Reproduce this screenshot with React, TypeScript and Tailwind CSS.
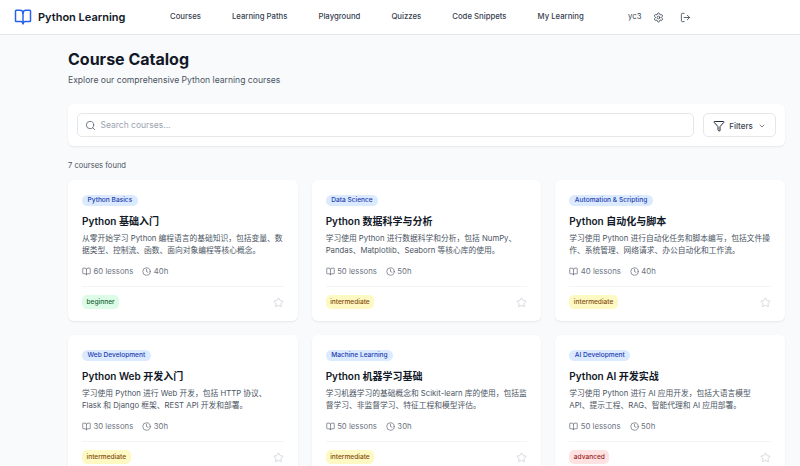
import { BookOpen, ChevronDown, Clock, Filter, LogOut, Search, Settings, Star } from "lucide-react";

const font = "[font-family:Inter,'Noto_Sans_CJK_SC',sans-serif]";

const navItems = ["Courses", "Learning Paths", "Playground", "Quizzes", "Code Snippets", "My Learning"];

const courses = [
  {
    category: "Python Basics",
    title: "Python 基础入门",
    description: "从零开始学习 Python 编程语言的基础知识，包括变量、数据类型、控制流、函数、面向对象编程等核心概念。",
    lessons: 60,
    hours: 40,
    level: "beginner",
  },
  {
    category: "Data Science",
    title: "Python 数据科学与分析",
    description: "学习使用 Python 进行数据科学和分析，包括 NumPy、Pandas、Matplotlib、Seaborn 等核心库的使用。",
    lessons: 50,
    hours: 50,
    level: "intermediate",
  },
  {
    category: "Automation & Scripting",
    title: "Python 自动化与脚本",
    description: "学习使用 Python 进行自动化任务和脚本编写，包括文件操作、系统管理、网络请求、办公自动化和工作流。",
    lessons: 40,
    hours: 40,
    level: "intermediate",
  },
  {
    category: "Web Development",
    title: "Python Web 开发入门",
    description: "学习使用 Python 进行 Web 开发，包括 HTTP 协议、Flask 和 Django 框架、REST API 开发和部署。",
    lessons: 30,
    hours: 30,
    level: "intermediate",
  },
  {
    category: "Machine Learning",
    title: "Python 机器学习基础",
    description: "学习机器学习的基础概念和 Scikit-learn 库的使用，包括监督学习、非监督学习、特征工程和模型评估。",
    lessons: 50,
    hours: 30,
    level: "intermediate",
  },
  {
    category: "AI Development",
    title: "Python AI 开发实战",
    description: "学习使用 Python 进行 AI 应用开发，包括大语言模型 API、提示工程、RAG、智能代理和 AI 应用部署。",
    lessons: 50,
    hours: 50,
    level: "advanced",
  },
];

const levelStyles: Record<string, string> = {
  beginner: "bg-[#dcfce7] text-[#166534]",
  intermediate: "bg-[#fef9c3] text-[#854d0e]",
  advanced: "bg-[#fee2e2] text-[#991b1b]",
};

const Navbar = () => (
  <header className="flex h-[35px] items-center border-b border-[#e5e7eb] bg-white">
    <div className="ml-[14px] flex w-[156px] items-center gap-[6px]">
      <BookOpen className="h-[18px] w-[18px] text-[#2563eb]" strokeWidth={2} />
      <span className="text-[11px] font-semibold text-[#111827]">Python Learning</span>
    </div>
    <nav className="flex w-[458px] items-center gap-[31px]">
      {navItems.map((item) => (
        <span key={item} className="text-[7.75px] font-medium text-[#374151]">
          {item}
        </span>
      ))}
    </nav>
    <span className="text-[7.75px] text-[#374151]">yc3</span>
    <Settings className="ml-[12px] h-[11px] w-[11px] text-[#4b5563]" />
    <LogOut className="ml-[16px] h-[11px] w-[11px] text-[#4b5563]" />
  </header>
);

const CourseCard = ({ course }: { course: (typeof courses)[number] }) => (
  <div className="flex h-[141px] flex-col rounded-[6px] bg-white px-[14px] pt-[15px] shadow-[0_1px_2px_rgba(0,0,0,0.08)]">
    <div className="flex">
      <span className="rounded-full bg-[#dbeafe] px-[5.5px] text-[6.6px] leading-[11px] font-medium text-[#1e40af]">
        {course.category}
      </span>
    </div>
    <h3 className="mt-[8px] text-[10px] leading-[14px] font-semibold text-[#111827]">{course.title}</h3>
    <p className="mt-[5px] h-[23px] text-[7.75px] leading-[11.5px] text-[#4b5563]">{course.description}</p>
    <div className="mt-[9px] flex items-center text-[7.75px] leading-[12px] text-[#6b7280]">
      <BookOpen className="mr-[2.5px] h-[9px] w-[9px]" />
      {course.lessons} lessons
      <Clock className="mr-[2.5px] ml-[9px] h-[9px] w-[9px]" />
      {course.hours}h
    </div>
    <div className="mt-[9px] flex items-center justify-between border-t border-[#f3f4f6] pt-[8px]">
      <span className={`rounded-[5px] px-[4.5px] text-[6.6px] leading-[14px] font-medium ${levelStyles[course.level]}`}>
        {course.level}
      </span>
      <Star className="h-[11px] w-[11px] text-[#d1d5db]" />
    </div>
  </div>
);

export default function App() {
  return (
    <div className={`h-[466px] overflow-hidden bg-[#f9fafb] ${font}`}>
      <Navbar />
      <main className="ml-[68px] w-[717px] pt-[14px]">
        <h1 className="text-[16px] leading-[20px] font-bold text-[#111827]">Course Catalog</h1>
        <p className="mt-[5px] text-[8.6px] leading-[12px] text-[#4b5563]">Explore our comprehensive Python learning courses</p>
        <div className="mt-[18px] flex items-center gap-[9px] rounded-[6px] bg-white p-[9px] shadow-[0_1px_2px_rgba(0,0,0,0.08)]">
          <div className="flex h-[24px] flex-1 items-center rounded-[5px] border border-[#e5e7eb] bg-white pl-[7px] pt-[1px]">
            <Search className="h-[11px] w-[11px] text-[#6b7280]" />
            <span className="ml-[4.5px] text-[8.5px] text-[#9ca3af]">Search courses...</span>
          </div>
          <div className="flex h-[24px] w-[73px] items-center justify-center rounded-[5px] border border-[#e5e7eb] bg-white pt-[1px] text-[8px] font-medium text-[#374151]">
            <Filter className="mr-[4px] h-[12px] w-[12px] text-[#1f2937]" />
            Filters
            <ChevronDown className="ml-[5px] h-[8px] w-[8px]" />
          </div>
        </div>
        <p className="mt-[14px] text-[7.6px] leading-[12px] text-[#4b5563]">7 courses found</p>
        <div className="mt-[8px] grid grid-cols-3 gap-[14px]">
          {courses.map((course) => (
            <CourseCard key={course.title} course={course} />
          ))}
        </div>
      </main>
    </div>
  );
}
